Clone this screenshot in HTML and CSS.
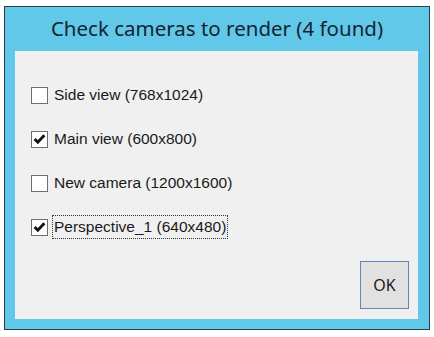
FILE: index.html
```html
<!DOCTYPE html>
<html lang="en">
<head>
    <meta charset="UTF-8">
    <meta name="viewport" content="width=device-width, initial-scale=1.0">
    <title>Render cameras</title>
    <link rel="stylesheet" href="styles.css">
</head>
<body>
    <div class="window">
        <div class="titlebar">Check cameras to render (4 found)</div>
        <div class="client">
            <ul class="camlist">
                <li class="cam">
                    <span class="box"></span>
                    <span class="label">Side view (768x1024)</span>
                </li>
                <li class="cam">
                    <span class="box"><svg viewBox="0 0 16 16" width="16" height="16"><path d="M2.8 8 L6.2 11.4 L13.2 4" fill="none" stroke="#111111" stroke-width="3"/></svg></span>
                    <span class="label">Main view (600x800)</span>
                </li>
                <li class="cam">
                    <span class="box"></span>
                    <span class="label">New camera (1200x1600)</span>
                </li>
                <li class="cam">
                    <span class="box"><svg viewBox="0 0 16 16" width="16" height="16"><path d="M2.8 8 L6.2 11.4 L13.2 4" fill="none" stroke="#111111" stroke-width="3"/></svg></span>
                    <span class="label focus">Perspective_1 (640x480)</span>
                </li>
            </ul>
            <div class="buttons">
                <button class="ok">OK</button>
            </div>
        </div>
    </div>
</body>
</html>
```

FILE: styles.css
```css
body{
    margin: 0;
    background: #ffffff;
    font-family: "Liberation Sans", Arial, sans-serif;
}
.window{
    margin: 6px 0 0 4px;
    width: 424px;
    height: 322px;
    border: 1px solid #2a3d49;
    background: #61c8ea;
    display: flex;
    flex-direction: column;
}
.titlebar{
    height: 44px;
    line-height: 42px;
    text-align: center;
    font-family: "Segoe UI", "Noto Sans", sans-serif;
    font-size: 20.5px;
    color: #14242e;
}
.client{
    flex: 1;
    margin: 0 11px 10px 10px;
    background: #f0f0f0;
    display: flex;
    flex-direction: column;
}
.camlist{
    list-style-type: none;
    margin: 0;
    padding: 32px 0 0 16px;
    display: flex;
    flex-direction: column;
    gap: 20px;
}
.cam{
    height: 24px;
    display: flex;
    align-items: center;
}
.box{
    width: 15px;
    height: 15px;
    border: 1px solid #707070;
    background: #ffffff;
    display: flex;
    align-items: center;
    justify-content: center;
}
.box svg{
    display: block;
}
.label{
    margin-left: 4px;
    font-size: 15.5px;
    color: #1a1a1a;
    padding: 2px 1px;
    border: 1px solid transparent;
}
.focus{
    border: 1px dotted #333333;
}
.buttons{
    margin-top: auto;
    display: flex;
    justify-content: flex-end;
    padding: 0 9px 10px 0;
}
.ok{
    width: 49px;
    height: 48px;
    background: #e1e1e1;
    border: 1px solid #5f86b6;
    font-family: "Segoe UI", "Noto Sans", sans-serif;
    font-size: 16px;
    color: #1a1a1a;
    padding: 0;
}
```
